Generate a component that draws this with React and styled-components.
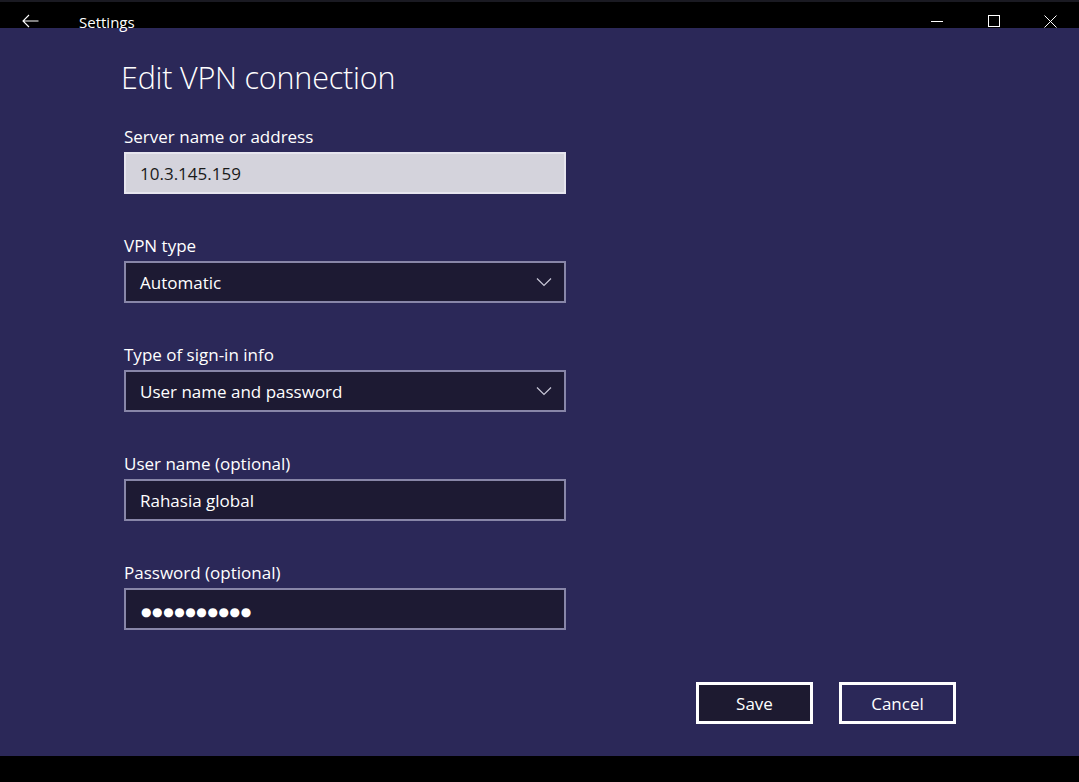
import React from "react";
import styled, { createGlobalStyle } from "styled-components";

const GlobalStyle = createGlobalStyle`
  html, body {
    margin: 0;
    padding: 0;
    background: #000;
  }
  * { box-sizing: border-box; }
`;

const Window = styled.div`
  width: 1079px;
  height: 782px;
  display: flex;
  flex-direction: column;
  font-family: "Open Sans", "Noto Sans", sans-serif;
  color: #fff;
  overflow: hidden;
`;

const TitleBar = styled.div`
  height: 28px;
  flex: none;
  background: #000;
  display: flex;
  align-items: flex-start;
  border-top: 2px solid #1a1a22;
  position: relative;
  z-index: 1;
`;

const BackButton = styled.div`
  width: 60px;
  height: 26px;
  display: flex;
  align-items: center;
  justify-content: center;
  padding-top: 12px;
  svg { display: block; }
`;

const AppTitle = styled.div`
  font-size: 15px;
  line-height: 20px;
  padding-top: 10px;
  margin-left: 19px;
  flex: 1;
`;

const Controls = styled.div`
  display: flex;
  height: 26px;
`;

const Control = styled.div`
  width: 57px;
  height: 26px;
  display: flex;
  align-items: center;
  justify-content: center;
  padding-top: 12px;
  svg { display: block; }
`;

const Content = styled.div`
  flex: 1;
  background: #2b2858;
  padding: 29px 123px 0 121px;
  display: flex;
  flex-direction: column;
`;

const Heading = styled.h1`
  margin: 0 0 30px;
  font-size: 30.5px;
  line-height: 40px;
  font-weight: 300;
  letter-spacing: -0.2px;
`;

const Form = styled.div`
  width: 442px;
  margin-left: 3px;
  display: flex;
  flex-direction: column;
  gap: 42px;
`;

const Field = styled.div`
  display: flex;
  flex-direction: column;
  gap: 5px;
`;

const Label = styled.div`
  font-size: 17px;
  line-height: 20px;
`;

const Box = styled.div`
  height: 42px;
  display: flex;
  align-items: center;
  justify-content: space-between;
  padding: 0 12px 0 14px;
  border: 2px solid ${(p) => (p.$filled ? "#e6e5ee" : "#8886a8")};
  background: ${(p) => (p.$filled ? "#d4d3dc" : "#1d1a33")};
  color: ${(p) => (p.$filled ? "#1a1a1a" : "#fff")};
  font-size: 17px;
`;

const Dots = styled.span`
  font-family: "DejaVu Sans", sans-serif;
  font-size: 12px;
  letter-spacing: 0.6px;
  margin-left: 1px;
`;

const Actions = styled.div`
  display: flex;
  justify-content: flex-end;
  gap: 26px;
  margin-top: 52px;
`;

const Button = styled.button`
  width: 117px;
  height: 42px;
  border: 3px solid #fff;
  background: ${(p) => (p.$primary ? "#1d1a30" : "#2b2858")};
  color: #fff;
  font-family: inherit;
  font-size: 17px;
  padding: 0;
`;

const Footer = styled.div`
  height: 26px;
  flex: none;
  background: #000;
`;

const Chevron = () => (
  <svg width="16" height="10" viewBox="0 0 16 10">
    <path d="M1 1.5 L8 8.5 L15 1.5" fill="none" stroke="#c9c8d8" strokeWidth="1.2" />
  </svg>
);

function TextField({ label, children, filled, select }) {
  return (
    <Field>
      <Label>{label}</Label>
      <Box $filled={filled}>
        <span>{children}</span>
        {select && <Chevron />}
      </Box>
    </Field>
  );
}

export default function App() {
  return (
    <>
      <GlobalStyle />
      <Window>
        <TitleBar>
          <BackButton>
            <svg width="17" height="14" viewBox="0 0 17 14">
              <path d="M16.5 7 H1 M7 1 L1 7 L7 13" fill="none" stroke="#fff" strokeWidth="1.1" />
            </svg>
          </BackButton>
          <AppTitle>Settings</AppTitle>
          <Controls>
            <Control>
              <svg width="12" height="12" viewBox="0 0 12 12">
                <path d="M0 6.5 H12" stroke="#fff" strokeWidth="1" />
              </svg>
            </Control>
            <Control>
              <svg width="12" height="12" viewBox="0 0 12 12">
                <rect x="0.5" y="0.5" width="11" height="11" fill="none" stroke="#fff" strokeWidth="1" />
              </svg>
            </Control>
            <Control>
              <svg width="13" height="13" viewBox="0 0 13 13">
                <path d="M0.5 0.5 L12.5 12.5 M12.5 0.5 L0.5 12.5" stroke="#fff" strokeWidth="1" />
              </svg>
            </Control>
          </Controls>
        </TitleBar>
        <Content>
          <Heading>Edit VPN connection</Heading>
          <Form>
            <TextField label="Server name or address" filled>10.3.145.159</TextField>
            <TextField label="VPN type" select>Automatic</TextField>
            <TextField label="Type of sign-in info" select>User name and password</TextField>
            <TextField label="User name (optional)">Rahasia global</TextField>
            <TextField label="Password (optional)">
              <Dots>●●●●●●●●●●</Dots>
            </TextField>
          </Form>
          <Actions>
            <Button $primary>Save</Button>
            <Button>Cancel</Button>
          </Actions>
        </Content>
        <Footer />
      </Window>
    </>
  );
}
